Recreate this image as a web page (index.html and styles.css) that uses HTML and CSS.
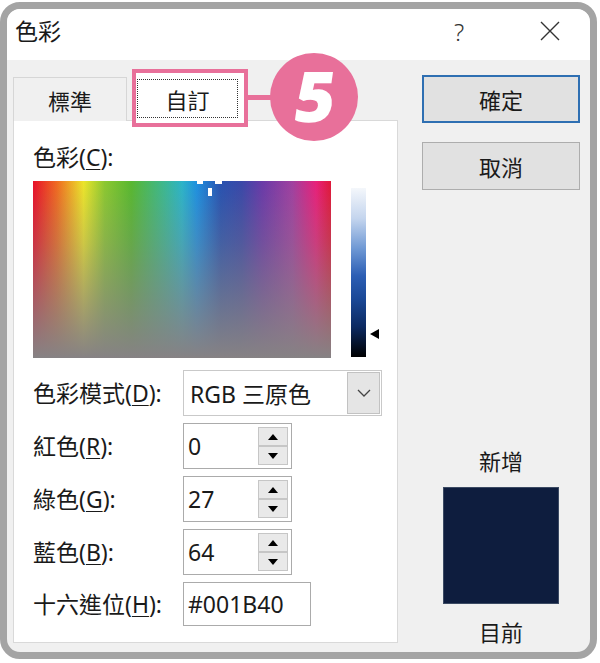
FILE: index.html
```html
<!DOCTYPE html>
<html lang="zh-Hant">
<head>
<meta charset="utf-8">
<title>色彩</title>
<link rel="stylesheet" href="styles.css">
</head>
<body>
<div class="frame">
  <div class="titlebar">
    <span class="title">色彩</span>
    <span class="tb-btn help">?</span>
    <span class="tb-btn close"><svg width="20" height="20" viewBox="0 0 20 20"><path d="M1 1L19 19M19 1L1 19" stroke="#333" stroke-width="1.4" fill="none"/></svg></span>
  </div>
  <div class="body">
    <div class="left">
      <div class="tabs">
        <div class="tab">標準</div>
        <div class="tab active"><span class="focus">自訂</span></div>
        <div class="callout-line"></div>
        <div class="callout"><span class="digit">5</span></div>
      </div>
      <div class="panel">
        <div class="lbl">色彩(<u>C</u>):</div>
        <div class="picker">
          <div class="spectrum"><i class="ch ch-l"></i><i class="ch ch-r"></i><i class="ch ch-b"></i></div>
          <div class="lum"></div>
          <div class="marker"></div>
        </div>
        <div class="fields">
          <div class="lbl">色彩模式(<u>D</u>):</div>
          <div class="combo"><span class="combo-text">RGB 三原色</span><span class="combo-btn"><svg width="14" height="8" viewBox="0 0 14 8"><path d="M1 1L7 7L13 1" stroke="#444" stroke-width="1.3" fill="none"/></svg></span></div>

          <div class="lbl">紅色(<u>R</u>):</div>
          <div class="spin"><span class="val">0</span><span class="spin-btns"><i class="up"></i><i class="down"></i></span></div>

          <div class="lbl">綠色(<u>G</u>):</div>
          <div class="spin"><span class="val">27</span><span class="spin-btns"><i class="up"></i><i class="down"></i></span></div>

          <div class="lbl">藍色(<u>B</u>):</div>
          <div class="spin"><span class="val">64</span><span class="spin-btns"><i class="up"></i><i class="down"></i></span></div>

          <div class="lbl">十六進位(<u>H</u>):</div>
          <div class="hex">#001B40</div>
        </div>
      </div>
    </div>
    <div class="right">
      <div class="btn default">確定</div>
      <div class="btn">取消</div>
      <div class="preview">
        <div class="cap">新增</div>
        <div class="swatch"></div>
        <div class="cap">目前</div>
      </div>
    </div>
  </div>
</div>
</body>
</html>
```

FILE: styles.css
```css
body {
  margin: 0;
  background: #fff;
  font-family: "Noto Sans", "Noto Sans CJK TC", sans-serif;
  color: #1a1a1a;
}

.frame {
  width: 597px;
  height: 657px;
  margin-top: 2px;
  box-sizing: border-box;
  border: 7px solid #a4a4a4;
  border-radius: 20px;
  overflow: hidden;
  display: flex;
  flex-direction: column;
  background: #f0f0f0;
}

.titlebar {
  height: 51px;
  flex: none;
  box-sizing: border-box;
  background: #fff;
  display: flex;
  align-items: flex-start;
  padding: 7px 17px 0 8px;
}

.title {
  font-size: 23px;
  line-height: 30px;
}

.tb-btn {
  width: 46px;
  height: 30px;
  display: flex;
  align-items: center;
  justify-content: center;
}

.help {
  margin-left: auto;
  font-size: 24px;
  font-weight: 300;
  color: #333;
}

.close {
  margin-left: 45px;
}

.body {
  flex: 1;
  display: flex;
  gap: 24px;
  padding: 0 10px 0 6px;
}

.left {
  width: 385px;
  display: flex;
  flex-direction: column;
  padding-bottom: 9px;
  box-sizing: border-box;
}

.tabs {
  height: 60px;
  flex: none;
  display: flex;
  align-items: flex-end;
  position: relative;
}

.tab {
  width: 114px;
  height: 44px;
  box-sizing: border-box;
  border: 1px solid #d6d6d6;
  border-bottom: none;
  margin-bottom: -1px;
  display: flex;
  align-items: center;
  justify-content: center;
  font-size: 22px;
  background: #f0f0f0;
}

.tab.active {
  width: 116px;
  height: 58px;
  margin-left: 5px;
  margin-bottom: -7px;
  border: 4px solid #e8709a;
  background: #fff;
  position: relative;
  z-index: 2;
  padding: 6px 6px 5px 1px;
}

.focus {
  flex: 1;
  align-self: stretch;
  border: 1px dotted #333;
  display: flex;
  align-items: center;
  justify-content: center;
}

.callout-line {
  position: absolute;
  left: 235px;
  top: 35px;
  width: 25px;
  height: 5px;
  background: #e8709a;
  z-index: 3;
}

.callout {
  position: absolute;
  left: 257px;
  top: -7px;
  width: 88px;
  height: 88px;
  border-radius: 50%;
  background: #e8709a;
  color: #fff;
  display: flex;
  align-items: center;
  justify-content: center;
  z-index: 3;
}

.digit {
  font-family: "Open Sans", "Noto Sans", sans-serif;
  font-weight: 800;
  font-size: 70px;
  line-height: 1;
  display: block;
  transform: skewX(-8deg) translateY(-2px);
  margin-left: 4px;
}

.panel {
  flex: 1;
  background: #fff;
  border: 1px solid #d9d9d9;
  padding: 21px 0 0 19px;
  box-sizing: border-box;
}

.lbl {
  font-size: 23px;
  line-height: 30px;
  white-space: nowrap;
}

.lbl u {
  text-underline-offset: 3px;
  text-decoration-thickness: 1px;
}

.picker {
  display: flex;
  align-items: flex-start;
  margin-top: 9px;
}

.spectrum {
  width: 298px;
  height: 177px;
  position: relative;
  overflow: hidden;
  background:
    linear-gradient(to bottom, rgba(134, 130, 132, 0) 0%, rgba(134, 130, 132, 0.3) 35%, rgba(134, 130, 132, 1) 100%),
    linear-gradient(to right,
      #e8102a 0%,
      #f06a20 8%,
      #ece52a 17%,
      #8cc830 24%,
      #58b830 33%,
      #3cb890 44%,
      #2cb4c8 50%,
      #1e90e0 55%,
      #2852b0 63%,
      #3a48a8 70%,
      #6a3aa8 77%,
      #a040a0 87%,
      #e8207a 95%,
      #e01838 100%);
}

.ch {
  position: absolute;
  background: #fff;
}

.ch-l { left: 164px; top: 0; width: 6px; height: 3px; }
.ch-r { left: 182px; top: 0; width: 7px; height: 3px; }
.ch-b { left: 175px; top: 7px; width: 4px; height: 8px; }

.lum {
  width: 15px;
  height: 169px;
  margin: 7px 0 0 20px;
  background: linear-gradient(to bottom,
    #f4f7fb 0%,
    #c4d5ee 18%,
    #6e98d4 36%,
    #2c5eb4 52%,
    #1a4896 66%,
    #0c2a62 82%,
    #000 100%);
}

.marker {
  width: 0;
  height: 0;
  margin: 148px 0 0 4px;
  border-top: 5px solid transparent;
  border-bottom: 5px solid transparent;
  border-right: 9px solid #000;
}

.fields {
  display: grid;
  grid-template-columns: 150px auto;
  row-gap: 7px;
  margin-top: 12px;
  align-items: center;
  justify-items: start;
}

.combo {
  width: 199px;
  height: 46px;
  box-sizing: border-box;
  border: 1px solid #c9c9c9;
  background: #fff;
  display: flex;
  align-items: center;
  padding: 1px;
}

.combo-text {
  flex: 1;
  padding-left: 5px;
  font-size: 23px;
}

.combo-btn {
  width: 33px;
  align-self: stretch;
  box-sizing: border-box;
  background: #e5e5e5;
  border: 1px solid #c2c2c2;
  display: flex;
  align-items: center;
  justify-content: center;
}

.spin {
  width: 109px;
  height: 46px;
  box-sizing: border-box;
  border: 1px solid #ababab;
  background: #fff;
  display: flex;
  align-items: center;
  padding: 0 3px 0 4px;
}

.val {
  flex: 1;
  font-size: 23px;
}

.spin-btns {
  width: 30px;
  display: flex;
  flex-direction: column;
}

.spin-btns i {
  height: 19px;
  box-sizing: border-box;
  border: 1px solid #c6c6c6;
  background: #e9e9e9;
  display: flex;
  align-items: center;
  justify-content: center;
}

.spin-btns i::after {
  content: "";
  width: 0;
  height: 0;
  border-left: 5px solid transparent;
  border-right: 5px solid transparent;
}

.spin-btns .up::after {
  border-bottom: 6px solid #000;
}

.spin-btns .down::after {
  border-top: 6px solid #000;
}

.hex {
  width: 128px;
  height: 44px;
  box-sizing: border-box;
  border: 1px solid #ababab;
  background: #fff;
  display: flex;
  align-items: center;
  padding-left: 4px;
  font-size: 23px;
}

.right {
  width: 158px;
  display: flex;
  flex-direction: column;
  padding-top: 15px;
}

.btn {
  height: 48px;
  box-sizing: border-box;
  border: 1px solid #adadad;
  background: #e1e1e1;
  display: flex;
  align-items: center;
  justify-content: center;
  font-size: 22px;
}

.btn.default {
  border: 2px solid #2e6fb2;
}

.btn + .btn {
  margin-top: 19px;
}

.preview {
  margin-top: auto;
  display: flex;
  flex-direction: column;
  align-items: center;
  padding-bottom: 5px;
}

.cap {
  font-size: 22px;
  line-height: 30px;
}

.swatch {
  width: 116px;
  height: 117px;
  box-sizing: border-box;
  margin: 11px 0 13px;
  background: #0e1d3e;
  border: 1px solid #3b4a63;
}
```
